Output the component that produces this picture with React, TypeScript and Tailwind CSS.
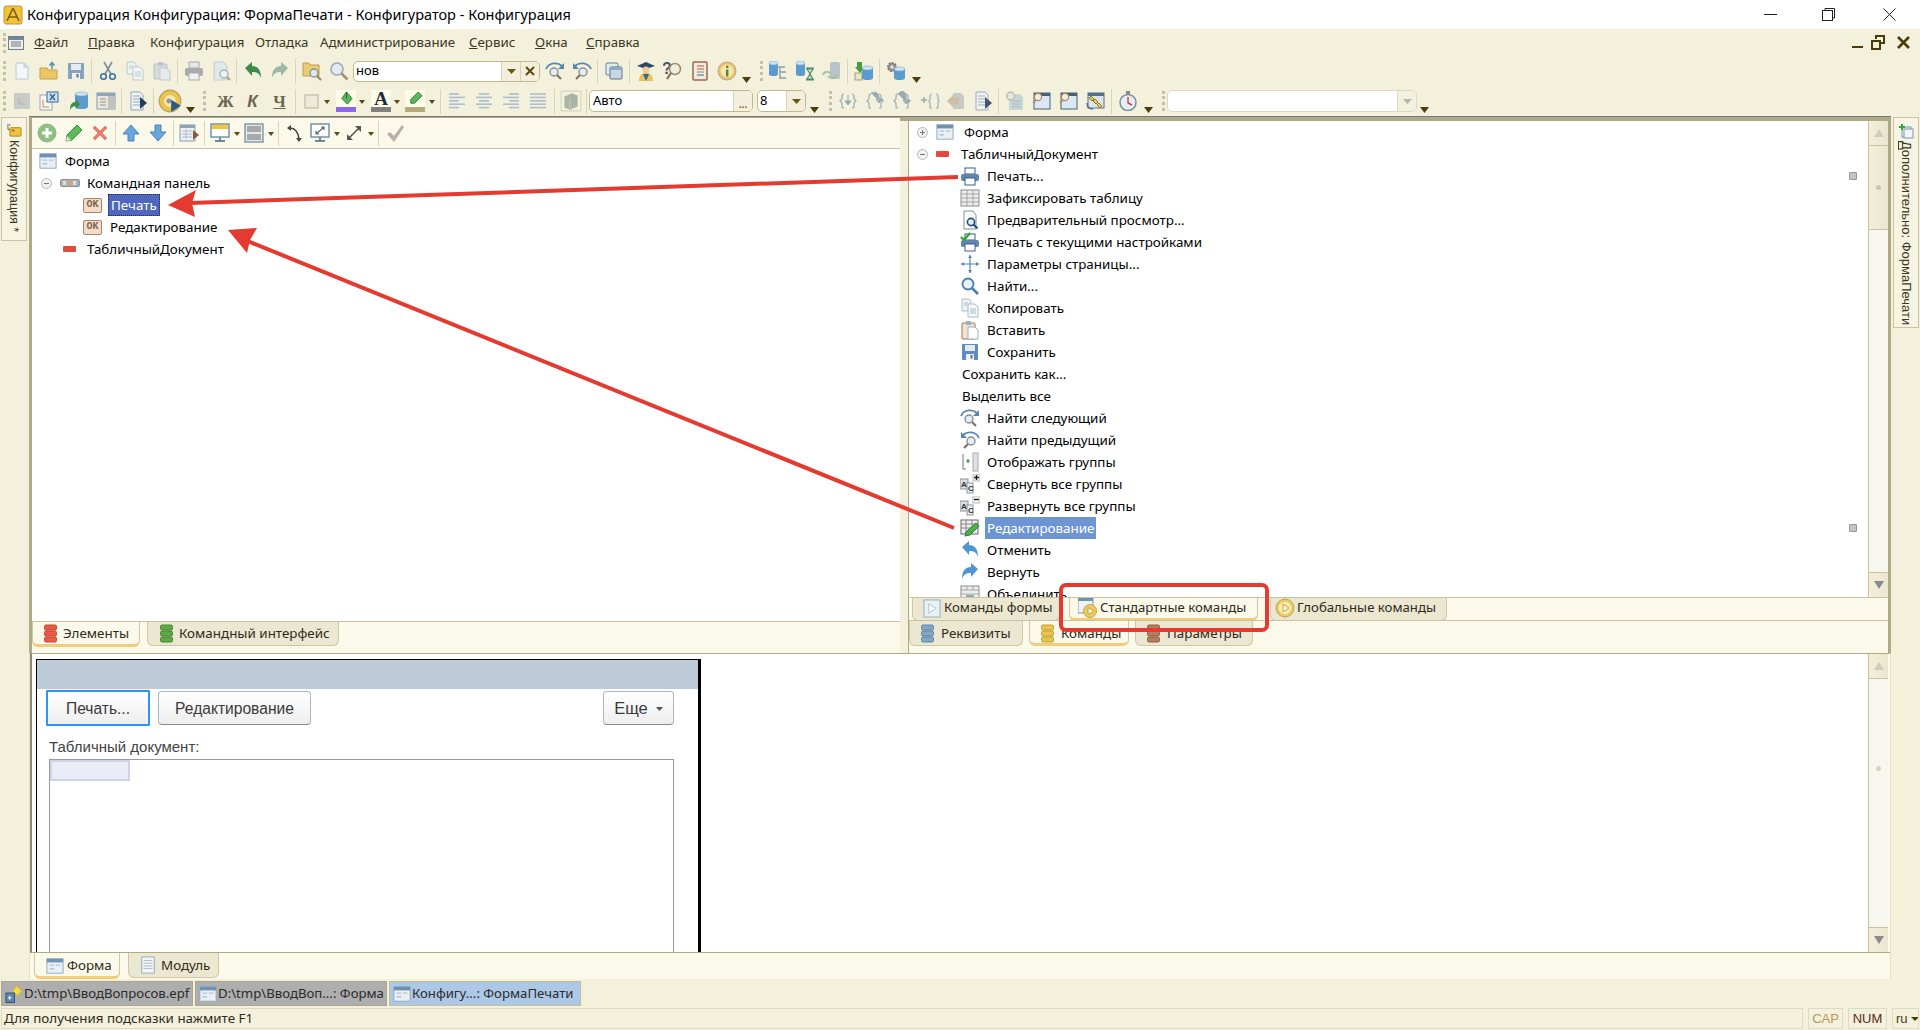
import React from "react";

type P = { children?: React.ReactNode; s?: number; o?: number };
const S = ({ children, s = 20, o = 1 }: P) => (
  <svg viewBox="0 0 20 20" width={s} height={s} opacity={o} className="shrink-0">{children}</svg>
);

const Btn = ({ children, cls = "w-[27px]" }: { children?: React.ReactNode; cls?: string }) => (
  <span className={`flex h-[26px] items-center justify-center shrink-0 ${cls}`}>{children}</span>
);
const Sep = () => <span className="mx-[2px] h-[25px] w-[1px] shrink-0 bg-[#d9d5bd]" />;
const Grip = ({ cls = "" }: { cls?: string }) => (
  <span className={`h-[20px] w-[3px] shrink-0 border-l-[3px] border-dotted border-[#c4c0a4] ${cls}`} />
);
const Dd = ({ cls = "w-[14px]", big = true }: { cls?: string; big?: boolean }) => (
  <span className={`flex shrink-0 justify-center ${cls} ${big ? "mt-[17px]" : "mt-[2px]"}`}>
    {big ? (
      <svg width="9" height="6"><path d="M0 0h9L4.5 6z" fill="#4d3c0c" /></svg>
    ) : (
      <svg width="6" height="4"><path d="M0 0h6L3 4z" fill="#5a4a18" /></svg>
    )}
  </span>
);

/* toolbar drawings */
const Doc = ({ o = 1 }) => <S o={o}><path d="M4 2h8l4 4v12H4z" fill="#f2f7fb" stroke="#b4cada" /><path d="M12 2v4h4z" fill="#d5e3ee" stroke="#b4cada" /></S>;
const Open = () => <S><path d="M1 7h7l1 2h9v9H1z" fill="#ecc766" stroke="#c3a050" /><path d="M13 8V2M10.5 4.5L13 1.5l2.5 3" fill="none" stroke="#5f8fb5" strokeWidth="1.6" /></S>;
const Save = ({ c = "#8aa3ba" }) => <S><rect x="2" y="2" width="16" height="16" rx="1" fill={c} /><rect x="5" y="3" width="10" height="6" fill="#e3ecf3" /><rect x="6" y="12" width="8" height="6" fill="#eef2f5" /><rect x="10.5" y="13" width="2" height="3.5" fill="#5d6d7c" /></S>;
const Cut = () => <S><path d="M7 13L14 1M13 13L6 1" stroke="#7c8d9c" strokeWidth="1.6" /><circle cx="5.5" cy="15.5" r="2.8" fill="none" stroke="#3c73ad" strokeWidth="1.6" /><circle cx="14.5" cy="15.5" r="2.8" fill="none" stroke="#3c73ad" strokeWidth="1.6" /></S>;
const Copy = ({ o = 0.75 }) => <S o={o}><path d="M2 1h7l2 2v10H2z" fill="#edf3f7" stroke="#a9bccb" /><path d="M8 6h7l3 3v10H8z" fill="#f6f9fb" stroke="#a9bccb" /><path d="M10 11h6M10 13h6M10 15h6M4 5h4M4 7h3" stroke="#a9bccb" /></S>;
const Paste = ({ o = 0.7 }) => <S o={o}><rect x="2" y="3" width="13" height="15" rx="1" fill="#c8d4dd" stroke="#9fb0be" /><rect x="6" y="1" width="5" height="4" fill="#a9b8c4" /><path d="M8 7h6l4 3v9H8z" fill="#e3eaef" stroke="#a9b8c4" /></S>;
const Print = ({ c = "#aaa", o = 1 }: { c?: string; o?: number }) => <S o={o}><rect x="5" y="1" width="10" height="6" fill="#e6e6e6" stroke={c} /><rect x="1" y="7" width="18" height="8" rx="2" fill={c} /><rect x="5" y="12" width="10" height="7" fill="#f2f2f2" stroke={c} /></S>;
const Prev = ({ o = 1, c = "#b5c4d0" }) => <S o={o}><path d="M3 1h9l4 4v14H3z" fill="#dfe7ee" stroke={c} /><circle cx="13" cy="13" r="4" fill="#eef3f6" stroke="#8aa" strokeWidth="1.4" /><path d="M16 16l3 3" stroke="#a58a68" strokeWidth="2" /></S>;
const Undo = ({ c = "#3c8c48", o = 1 }) => <S o={o}><path d="M2 7l7-6v4c5 0 9 3 9 12-2-5-4-6-9-6v4z" fill={c} /></S>;
const Redo = ({ c = "#9db8a4" }) => <S><path d="M18 7l-7-6v4c-5 0-9 3-9 12 2-5 4-6 9-6v4z" fill={c} /></S>;
const FolderFind = () => <S><path d="M1 2h6l1 2h9v11H1z" fill="#eccb76" stroke="#bb9d55" /><circle cx="12" cy="12" r="4" fill="#dfe8ee" stroke="#84909a" strokeWidth="1.3" /><path d="M15 15l4 4" stroke="#a07f5c" strokeWidth="2" /></S>;
const Mag = ({ s = 20 }) => <S s={s}><circle cx="8" cy="8" r="6" fill="#e0ebf4" stroke="#9aa8b2" strokeWidth="1.5" /><path d="M12.5 12.5l6 6" stroke="#b08c66" strokeWidth="2.6" /></S>;
const Arc = ({ flip = false, s = 20 }) => <svg viewBox="0 0 20 20" width={s} height={s} className={`shrink-0 ${flip ? "-scale-x-100" : ""}`}><path d="M1 8C4 1 13 1 17 5" fill="none" stroke="#5586b0" strokeWidth="1.8" /><path d="M19 2v6h-6z" fill="#5586b0" /><circle cx="9" cy="11" r="4" fill="#e3edf3" stroke="#8a8f98" strokeWidth="1.4" /><path d="M12 14l4 4" stroke="#8a6e5c" strokeWidth="2.2" /></svg>;
const Wins = () => <S><rect x="2" y="2" width="12" height="12" rx="1" fill="#dfe9f0" stroke="#6f8596" /><rect x="6" y="6" width="12" height="12" rx="1" fill="#c7d8e4" stroke="#5a7286" /><rect x="6" y="6" width="12" height="3" fill="#8ba9c0" /></S>;
const Hat = () => <S><path d="M1 5l9-4 9 4-9 3z" fill="#2c4a68" /><circle cx="10" cy="9" r="3.6" fill="#f0caa0" /><path d="M3 20c0-6 3-8 7-8s7 2 7 8z" fill="#e9c25a" /><path d="M7 13l3 7 3-7z" fill="#37658c" /></S>;
const QMag = () => <S><text x="-1" y="13" fontSize="16" fontWeight="700" fontFamily="Liberation Sans" fill="#45596d">?</text><circle cx="12" cy="8" r="5.5" fill="#f0f0dc" stroke="#9c8c68" strokeWidth="1.5" /><path d="M8 12l-4 6" stroke="#8c6c50" strokeWidth="2.2" /></S>;
const Book = () => <S><rect x="3" y="1" width="14" height="18" rx="1" fill="#f3e9df" stroke="#9c6a4e" strokeWidth="1.5" /><path d="M7 5h7M7 8h7" stroke="#c05a48" /><path d="M7 11h7" stroke="#5ba060" /><path d="M7 14h7" stroke="#3f6c96" /></S>;
const Info = () => <S><circle cx="10" cy="10" r="9" fill="#efc05e" stroke="#a9a9a0" /><circle cx="10" cy="10" r="6.5" fill="#f8e6ae" /><rect x="9" y="8.5" width="2.4" height="7" fill="#4c8c3e" /><circle cx="10.2" cy="5.8" r="1.4" fill="#4c8c3e" /></S>;
const Db = ({ x = 7, y = 4, w = 11, h = 14, o = 1 }) => <g opacity={o}><rect x={x} y={y} width={w} height={h} fill="#5b9bd0" /><ellipse cx={x + w / 2} cy={y + h} rx={w / 2} ry="2" fill="#5b9bd0" /><ellipse cx={x + w / 2} cy={y} rx={w / 2} ry="2" fill="#cfe2f0" stroke="#80a8c8" strokeWidth=".6" /></g>;
const DbTree = () => <S><Db x={1} y={2} w={9} h={11} /><path d="M9 6h8M12 6v12M12 11h6M12 17h6" stroke="#90a0a8" strokeWidth="1.4" fill="none" /></S>;
const DbHour = () => <S><Db x={1} y={2} w={9} h={11} /><path d="M11 7h8M11 19h8M12 8l3 5-3 5h6l-3-5 3-5z" fill="#cfe0cc" stroke="#4c8c6a" strokeWidth="1.1" /></S>;
const DbRec = () => <S><rect x="8" y="1" width="10" height="17" rx="2" fill="#b9c2c8" /><path d="M1 14c1-4 6-4 8-1M15 14c-1 4-7 4-9 1" fill="none" stroke="#a6c3a6" strokeWidth="2" /></S>;
const DbDown = () => <S><path d="M3 1h5v5h3l-5 6-5-6h2z" fill="#4b9a3c" /><rect x="1" y="12" width="7" height="7" fill="#ece6c8" stroke="#a99d78" /><Db x={8} y={7} w={11} h={10} /></S>;
const DbGear = () => <S><circle cx="6" cy="6" r="4" fill="#989898" stroke="#777" strokeWidth="2" strokeDasharray="2 1" /><circle cx="6" cy="6" r="1.5" fill="#eee" /><Db x={8} y={8} w={11} h={9} /></S>;
const Gray = () => <S><rect x="2" y="2" width="16" height="16" rx="1" fill="#c9cbc6" /><path d="M7 7v6h6" stroke="#adb0ab" fill="none" /></S>;
const XDoc = () => <S><rect x="1" y="4" width="12" height="15" fill="#f8f6ea" stroke="#97a8b6" /><rect x="8" y="1" width="11" height="10" fill="#cfe0ee" stroke="#34699a" /><path d="M11 3l5 6M16 3l-5 6" stroke="#34699a" strokeWidth="1.5" /><path d="M4 9v7h6" stroke="#c08a6a" fill="none" /></S>;
const DbArrow = () => <S><Db x={6} y={3} w={13} h={13} /><path d="M1 19c0-6 2-8 6-8V8l4 5-4 5v-3c-3 0-4 1-6 4z" fill="#3d8f4c" /></S>;
const Panel = () => <S><rect x="1" y="2" width="18" height="16" fill="#e5e7e2" stroke="#8a9aa6" /><rect x="1" y="2" width="18" height="3" fill="#8ea6b8" /><rect x="12" y="5" width="7" height="13" fill="#bfc3bc" /><path d="M4 8h6M4 11h6M4 14h6" stroke="#a98f76" /></S>;
const DocArr = ({ o = 1 }) => <S o={o}><path d="M3 1h9l3 3v15H3z" fill="#eef3f7" stroke="#8fa4b6" /><path d="M5 5h7M5 8h7M5 11h7M5 14h7" stroke="#94a9ba" /><path d="M12 6l7 6-7 6z" fill="#243d58" /></S>;
const Disc = () => <S s={24}><circle cx="10" cy="10" r="9" fill="#eec24e" stroke="#b5a45c" /><circle cx="10" cy="10" r="5" fill="#f8e7a8" /><circle cx="9" cy="10" r="2" fill="#7d98ae" /><path d="M11 9l8 5-8 5z" fill="#2a5a86" /></S>;
const Box = () => <S><rect x="4" y="4" width="13" height="13" fill="#ecebd9" stroke="#c6c4aa" strokeWidth="1.4" /></S>;
const Fill = () => <span className="flex w-[20px] flex-col items-center shrink-0"><span className="flex h-[17px] w-[20px] items-center justify-center bg-[#fdfce9]"><svg viewBox="0 0 16 16" width="15" height="15"><path d="M8 1l6 7-5 6-6-6z" fill="#5cb85c" stroke="#3a7a3e" /><path d="M8 1v7" stroke="#2b5a2e" /></svg></span><span className="h-[5px] w-[20px] bg-[#8a68f0]" /></span>;
const AIcon = () => <span className="flex w-[20px] flex-col items-center shrink-0"><span className="flex h-[17px] w-[20px] items-center justify-center bg-[#fdfce9] font-['Liberation_Serif'] text-[19px] font-bold leading-none text-[#1d2a3a]">A</span><span className="h-[5px] w-[20px] bg-[#808080]" /></span>;
const Marker = () => <span className="flex w-[20px] flex-col items-center shrink-0"><span className="flex h-[17px] w-[20px] items-center justify-center bg-[#fdfce9]"><svg viewBox="0 0 16 16" width="15" height="15"><path d="M11 1l4 4-8 8H3v-4z" fill="#58b85a" stroke="#3a7a3e" /></svg></span><span className="h-[5px] w-[20px] bg-[#b4ab7a]" /></span>;
const Align = ({ k }: { k: number }) => {
  const l = k === 0 ? [2, 2, 2, 2, 2] : k === 1 ? [5, 2, 5, 2, 5] : k === 2 ? [8, 2, 8, 2, 8] : [2, 2, 2, 2, 2];
  const r = k === 0 ? [12, 18, 12, 18, 12] : k === 1 ? [15, 18, 15, 18, 15] : k === 2 ? [18, 18, 18, 18, 18] : [18, 18, 18, 18, 18];
  return <S>{l.map((a, i) => <path key={i} d={`M${a} ${3 + i * 3.4}H${r[i]}`} stroke="#a9bccb" strokeWidth="1.5" />)}</S>;
};
const Cube = () => <S s={22}><rect x="1" y="1" width="18" height="18" fill="none" stroke="#bdbca6" strokeDasharray="1 1" /><path d="M4 6l7-3 5 2v10l-7 3-5-2z" fill="#a9b5a2" /><path d="M9 7v11" stroke="#c5ccbf" /></S>;
const Brace = ({ k }: { k: number }) => (
  <S o={0.75}>
    <path d={k === 3 ? "M12 3c-2 0-2 1-2 3v2l-1 2 1 2v3c0 2 0 2 2 2M16 3c2 0 2 1 2 3v2l1 2-1 2v3c0 2 0 2-2 2" : "M5 3c-2 0-2 1-2 3v2l-2 2 2 2v3c0 2 0 2 2 2M13 3c2 0 2 1 2 3v2l2 2-2 2v3c0 2 0 2-2 2"} fill="none" stroke="#8198a8" strokeWidth="1.2" />
    {k === 0 && <path d="M9 4v9M6 10l3 4 3-4z" fill="#7a94a6" stroke="#7a94a6" />}
    {k === 1 && <path d="M5 2c5-2 8 0 8 5v3M10 8l3 4 4-4z" fill="#7a94a6" stroke="#7a94a6" />}
    {k === 2 && <path d="M5 3c3-4 8-3 8 2v6M10 9l3 4 4-4z" fill="#7a94a6" stroke="#7a94a6" />}
    {k === 3 && <path d="M1 9h6M4 6v6" stroke="#7a94a6" strokeWidth="1.4" />}
  </S>
);
const DiamondDoc = () => <S o={0.7}><path d="M7 2h8l3 3v13H7z" fill="#b5bcc0" /><path d="M1 10l6-6v3h6v6H7v3z" fill="#c2a88e" /></S>;
const DocMag = () => <S o={0.7}><path d="M4 3h11l3 3v13H4z" fill="#b9cad6" /><path d="M7 10h9M7 13h9M7 16h9" stroke="#8ea6b8" /><circle cx="5.5" cy="5" r="3.8" fill="#dfe6ea" stroke="#a89a88" strokeWidth="1.2" /></S>;
const WinMag = () => <S><rect x="2" y="2" width="16" height="16" fill="#dbe8f3" stroke="#46607a" /><rect x="2" y="2" width="16" height="3" fill="#46607a" /><circle cx="6" cy="6" r="3.6" fill="#f2eedc" stroke="#a8896a" strokeWidth="1.2" /><path d="M4 9l-3 3" stroke="#a8896a" strokeWidth="1.6" /></S>;
const WinChain = () => <S><rect x="2" y="2" width="16" height="15" fill="#dbe5ee" stroke="#54708a" /><rect x="2" y="2" width="16" height="3" fill="#54708a" /><path d="M5 5l3 3-2 2-3-3zM9 8l3 3-2 2-3-3zM13 12l3 3-2 2-3-3z" fill="#ecc54f" stroke="#967a2a" /><path d="M1 12c0 4 2 6 6 6" fill="none" stroke="#54708a" strokeWidth="1.4" /></S>;
const Clock = () => <S><rect x="8" y="0" width="4" height="3" fill="#8a8a82" /><circle cx="10" cy="11.5" r="8" fill="#e3eef6" stroke="#7d8c98" strokeWidth="1.5" /><path d="M10 6v6l4 2" stroke="#d0402e" strokeWidth="1.4" fill="none" /></S>;

const PlusC = () => <S><circle cx="10" cy="10" r="9" fill="#8fc07e" stroke="#9aa89a" /><path d="M10 5v10M5 10h10" stroke="#fff" strokeWidth="3" /></S>;
const Pencil = () => <S><path d="M13 2l5 5-10 10-6 1 1-6z" fill="#5bbb58" stroke="#3b8b40" /><path d="M3 13l4 4-5 1z" fill="#e3e7d0" /></S>;
const RedX = () => <S><path d="M3 5l2-2 5 5 5-5 2 2-5 5 5 5-2 2-5-5-5 5-2-2 5-5z" fill="#ea7b70" stroke="#d66459" strokeWidth=".5" /></S>;
const UpA = ({ down = false }) => <S><path d={down ? "M7 2h6v7h5l-8 9-8-9h5z" : "M7 18h6v-7h5l-8-9-8 9h5z"} fill="#66a8dc" stroke="#4c84b4" /></S>;
const TblArr = () => <S><rect x="1" y="2" width="15" height="16" fill="#eef1f4" stroke="#8a9cac" /><rect x="1" y="2" width="15" height="3" fill="#8ea6b8" /><path d="M3 8h10M3 11h10M3 14h10M7 6v10" stroke="#b1bcc6" /><path d="M14 7l6 5-6 5z" fill="#8c5a3a" /></S>;
const Mon = ({ kind }: { kind: number }) => <S><rect x="1" y="1" width="18" height="13" fill="#fff" stroke="#6d8a9e" strokeWidth="1.4" />{kind === 0 ? <rect x="2" y="2" width="16" height="4" fill="#f2c72c" /> : <path d="M6 11l8-7M11 4h3v3M6 8v3h3" stroke="#5a6c78" strokeWidth="1.2" fill="none" />}<path d="M10 14v3M5 18h10" stroke="#6d8a9e" strokeWidth="2" /></S>;
const Split = () => <S><rect x="1" y="1" width="18" height="18" fill="#e2e8ec" stroke="#7b97ab" strokeWidth="1.4" /><rect x="3" y="3" width="14" height="6" fill="#a9a9a9" /><rect x="3" y="11" width="14" height="6" fill="#a9a9a9" /></S>;
const PathI = () => <S><path d="M5 5c5 0 8 4 9 11" fill="none" stroke="#444" strokeWidth="1.6" /><path d="M6 2l-4 3 4 3zM11 15l3 4 3-4z" fill="#444" /></S>;
const Expand = () => <S><path d="M4 16L16 4" stroke="#555" strokeWidth="1.6" /><path d="M11 3h6v6zM3 11v6h6z" fill="#555" /></S>;
const Check = () => <S><path d="M2 11l3-2 4 4 8-11 2 2-10 15z" fill="#bcaeac" /></S>;

const FormI = ({ s = 18 }) => <S s={s}><rect x="1" y="2" width="18" height="16" fill="#e9eff4" stroke="#8fa7ba" /><rect x="1" y="2" width="18" height="4" fill="#6e93b2" /><path d="M4 9h5M11 9h5M4 13h5" stroke="#b0c3d2" strokeWidth="1.5" /></S>;
const Cmd = () => <svg width="20" height="8" className="shrink-0"><rect x=".5" y=".5" width="19" height="7" rx="1" fill="#aab0b6" stroke="#8a9096" /><rect x="3" y="2" width="3" height="4" fill="#e6e0c0" /><rect x="8" y="2" width="3" height="4" fill="#e09a70" /><rect x="13" y="2" width="3" height="4" fill="#e6e0c0" /></svg>;
const Ok = () => <span className="flex h-[15px] w-[19px] shrink-0 items-center justify-center rounded-[2px] border border-[#a5856c] bg-[#f6dcc6] font-['Liberation_Mono'] text-[10px] font-bold leading-none text-[#7c6552]">OK</span>;
const Dash = () => <span className="block h-[6px] w-[13px] shrink-0 rounded-[1px] bg-[#e04b3c]" />;
const Tree = ({ minus }: { minus?: boolean }) => <span className="flex h-[11px] w-[11px] shrink-0 items-center justify-center rounded-full border border-[#b5b9bb] bg-[#f2f2f2]"><svg width="7" height="7"><path d={minus ? "M1 3.5h5" : "M1 3.5h5M3.5 1v5"} stroke="#777" /></svg></span>;

const PrintB = ({ check = false }) => <S><rect x="5" y="2" width="10" height="6" fill="#fff" stroke="#395f86" /><rect x="1" y="8" width="18" height="7" rx="2" fill="#5f86ae" /><rect x="5" y="12" width="10" height="7" fill="#fff" stroke="#395f86" />{check && <path d="M1 5l3 3 6-7" stroke="#2fa838" strokeWidth="2.4" fill="none" />}</S>;
const Grid = () => <S><rect x="1" y="2" width="18" height="16" fill="#ededed" stroke="#8c8c8c" /><path d="M1 6h18M1 10h18M1 14h18M7 2v16M13 2v16" stroke="#a4a4a4" /></S>;
const PrevB = () => <S><path d="M4 1h9l3 4v14H4z" fill="#fff" stroke="#7f8d98" /><circle cx="11" cy="12" r="3.6" fill="#e4eff6" stroke="#1e4e80" strokeWidth="1.6" /><path d="M13.5 14.5l4 4" stroke="#1e4e80" strokeWidth="2.2" /></S>;
const Cross = () => <S><path d="M10 1v18M1 10h18" stroke="#5f86ae" strokeWidth="1.2" /><path d="M10 1l-2 3h4zM10 19l-2-3h4zM1 10l3-2v4zM19 10l-3-2v4z" fill="#5f86ae" /></S>;
const FindB = () => <S><circle cx="8" cy="8" r="5.5" fill="#e7f1f9" stroke="#4d7da9" strokeWidth="1.8" /><path d="M12 12l6 6" stroke="#4d7da9" strokeWidth="2.6" /></S>;
const Group = () => <S><path d="M3 2v15h3" fill="none" stroke="#777" /><rect x="13" y="1" width="5" height="18" fill="#e0e0e0" stroke="#aaa" /><path d="M6 9h4M8 7v4" stroke="#2e8a3c" strokeWidth="1.2" /></S>;
const Abc = ({ plus }: { plus?: boolean }) => <S><rect x="0" y="5" width="8" height="10" fill="#d9dfe4" stroke="#8a96a0" /><rect x="7" y="9" width="6" height="10" fill="#eceff1" stroke="#8a96a0" /><text x="1" y="13" fontSize="8" fontWeight="700" fontFamily="Liberation Sans" fill="#333">A</text><text x="8" y="17" fontSize="8" fontWeight="700" fontFamily="Liberation Sans" fill="#333">C</text><rect x="13" y="0" width="7" height="7" fill="#f2f2f2" stroke="#bbb" /><path d={plus ? "M14 3.5h5M16.5 1v5" : "M14 3.5h5"} stroke="#222" strokeWidth="1.4" /></S>;
const EditT = () => <S><rect x="1" y="2" width="17" height="14" fill="#eee" stroke="#666" /><path d="M1 6h17M1 10h17M6 2v14M12 2v14" stroke="#888" /><path d="M16 5l3 3-9 9-5 1 1-4z" fill="#4db04a" stroke="#2d7f34" /></S>;
const MergeT = () => <S><rect x="1" y="2" width="18" height="17" fill="#eee" stroke="#8c8c8c" /><path d="M1 6h18M1 10h18M7 2v4M13 2v4" stroke="#a4a4a4" /><rect x="6" y="11" width="8" height="7" fill="#90a7ba" /></S>;

const Stack = ({ c, d }: { c: string; d: string }) => (
  <svg width="13" height="19" className="shrink-0"><rect x=".5" y="1" width="12" height="5" rx="1.5" fill={c} stroke={d} /><rect x=".5" y="7" width="12" height="5" rx="1.5" fill={c} stroke={d} /><rect x=".5" y="13" width="12" height="5" rx="1.5" fill={c} stroke={d} /></svg>
);
const PlayDoc = () => <S s={19}><rect x="1" y="1" width="17" height="18" fill="#e9f1f7" stroke="#93aabb" /><path d="M6 5l8 5-8 5z" fill="#fff" stroke="#adc0cf" /></S>;
const PlayCoin = ({ win }: { win?: boolean }) => win ? (
  <S><rect x="0" y="0" width="15" height="15" fill="#eef3f6" stroke="#7d99ae" /><rect x="0" y="0" width="15" height="3" fill="#6e93b2" /><circle cx="12" cy="13" r="6.5" fill="#eec95c" stroke="#c4a64e" /><path d="M10 9.5l6 3.5-6 3.5z" fill="#fdf6d0" stroke="#c4a64e" /></S>
) : (
  <S><circle cx="10" cy="10" r="9" fill="#eec95c" stroke="#b5a56a" /><circle cx="10" cy="10" r="6.3" fill="#f8ecb0" /><path d="M8 6l6 4-6 4z" fill="#fdf6d0" stroke="#c4a64e" /></S>
);

const Scroll = ({ children }: { children?: React.ReactNode }) => (
  <div className="flex h-full w-[20px] shrink-0 flex-col border-l border-[#c8c2a2] bg-[#f8f7ef]">
    {children}
  </div>
);
const ArrowBtn = ({ down, cls = "h-[25px]" }: { down?: boolean; cls?: string }) => (
  <div className={`flex w-full shrink-0 items-center justify-center border-[#c8c2a2] bg-gradient-to-r from-[#f3efdc] to-[#ebe6cd] ${cls} ${down ? "border-t" : "border-b"}`}>
    <svg width="10" height="10"><path d={down ? "M0 1h10L5 9z" : "M0 9h10L5 1z"} fill={down ? "#8a8a8a" : "#cfcdbb"} /></svg>
  </div>
);

const Tab = ({ active, cls, children }: { active?: boolean; cls: string; children: React.ReactNode }) => (
  <div className={`flex shrink-0 items-center rounded-b-[6px] border border-t-0 border-[#cdc7a6] text-[#2e2b1a] ${active ? "bg-[#fbf9ea] border-b-[3px] border-b-[#f0cd7c]" : "bg-[#ece7d0]"} ${cls}`}>
    {children}
  </div>
);

const Row = ({ pl, label, icon, mark, sel, dark, box }: { pl: string; label: string; icon?: React.ReactNode; mark?: boolean; sel?: boolean; dark?: boolean; box?: React.ReactNode }) => (
  <div className={`relative flex h-[22px] shrink-0 items-center text-black ${pl}`}>
    {box}
    {icon}
    {label && (
      <span className={`flex h-[22px] items-center whitespace-nowrap px-[2px] ${sel ? "bg-[#6e95d3] text-white" : ""} ${dark ? "border border-dotted border-[#1c2a66] bg-[#4f68bd] text-white" : ""}`}>{label}</span>
    )}
    {mark && <span className="absolute right-[11px] top-[7px] h-[8px] w-[8px] rounded-[1px] border border-[#999] bg-[#c4c4c4]" />}
  </div>
);

const M = ({ w, u, t }: { w: string; u?: string; t: string }) => (
  <span className={`shrink-0 whitespace-nowrap ${w}`}>{u && <u>{u}</u>}{t}</span>
);

export default function App() {
  return (
    <div className="relative flex h-[1030px] w-[1920px] flex-col overflow-hidden bg-[#f3f0dc] font-['Noto_Sans','Liberation_Sans',sans-serif] text-[13.4px] text-[#2e2b1a]">
      {/* title bar */}
      <div className="flex h-[29px] shrink-0 items-center bg-white pl-[3px] text-[14.5px] text-black">
        <svg width="20" height="20" viewBox="0 0 20 20" className="shrink-0"><rect x="1" y="1" width="18" height="18" rx="2" fill="#f2c430" stroke="#b89a3a" /><path d="M10 3L4 16M10 3l6 13M6 12h8" stroke="#7a5a1e" strokeWidth="1.6" fill="none" /></svg>
        <span className="ml-[4px] whitespace-nowrap">Конфигурация Конфигурация: ФормаПечати - Конфигуратор - Конфигурация</span>
        <div className="ml-auto flex items-center">
          <Btn cls="w-[57px]"><svg width="14" height="2"><rect width="13" height="1" fill="#222" /></svg></Btn>
          <Btn cls="w-[59px]"><svg width="13" height="13" fill="none" stroke="#222"><path d="M3 2.5V.5h9.5V10H10.5" /><rect x=".5" y="2.5" width="10" height="10" /></svg></Btn>
          <Btn cls="w-[62px]"><svg width="13" height="13" stroke="#222"><path d="M.5.5l12 12M12.5.5l-12 12" /></svg></Btn>
        </div>
      </div>

      {/* menu */}
      <div className="flex h-[27px] shrink-0 items-center pl-[3px] text-[13.3px] text-[#3a361f]">
        <Grip cls="h-[14px] mr-[2px]" />
        <svg width="16" height="14" viewBox="0 0 16 14" className="mr-[10px] shrink-0"><rect x=".5" y=".5" width="15" height="13" fill="#eee" stroke="#6c7d8c" /><rect x="1" y="1" width="14" height="3" fill="#6c8aa4" /><path d="M3 6h10M3 8h10M3 10h10" stroke="#777" /></svg>
        <M w="w-[54px]" u="Ф" t="айл" />
        <M w="w-[62px]" u="П" t="равка" />
        <M w="w-[105px]" t="Конфигурация" />
        <M w="w-[65px]" t="Отладка" />
        <M w="w-[149px]" t="Администрирование" />
        <M w="w-[66px]" u="С" t="ервис" />
        <M w="w-[51px]" u="О" t="кна" />
        <M w="w-[60px]" u="С" t="правка" />
        <div className="ml-auto mr-[10px] flex items-center gap-[8px]">
          <svg width="11" height="4" className="mt-[9px]"><rect width="11" height="2" y="1" fill="#4a3a0c" /></svg>
          <svg width="14" height="15" fill="none" stroke="#4a3a0c" strokeWidth="2"><path d="M5 4V1h8v7h-3" /><rect x="1" y="6" width="8" height="8" /></svg>
          <svg width="13" height="13" stroke="#4a3a0c" strokeWidth="2.6" className="ml-[4px]"><path d="M1 1l11 11M12 1L1 12" /></svg>
        </div>
      </div>

      {/* toolbar 1 */}
      <div className="flex h-[30px] shrink-0 items-center pl-[3px]">
        <Grip cls="mr-[2px]" />
        <Btn><Doc /></Btn><Btn><Open /></Btn><Btn><Save /></Btn><Sep />
        <Btn><Cut /></Btn><Btn><Copy /></Btn><Btn><Paste /></Btn><Sep />
        <Btn><Print /></Btn><Btn><Prev o={0.8} /></Btn><Sep />
        <Btn><Undo /></Btn><Btn><Redo /></Btn><Sep />
        <Btn><FolderFind /></Btn><Btn cls="w-[28px]"><Mag /></Btn>
        <div className="flex h-[21px] w-[187px] shrink-0 items-center overflow-hidden rounded-[5px] border border-[#c0b88e] bg-white text-[13px] text-black">
          <span className="flex-1 pl-[2px]">нов</span>
          <span className="flex h-full w-[19px] items-center justify-center border-l border-[#d8d3b4] bg-[#f3efdc]"><svg width="9" height="5"><path d="M0 0h9L4.5 5z" fill="#6c5614" /></svg></span>
          <span className="flex h-full w-[19px] items-center justify-center border-l border-[#d8d3b4] bg-[#f3efdc]"><svg width="10" height="10" stroke="#5c4a10" strokeWidth="2"><path d="M1 1l8 8M9 1L1 9" /></svg></span>
        </div>
        <Btn cls="ml-[1px] w-[27px]"><Arc /></Btn><Btn><Arc flip /></Btn><Sep />
        <Btn><Wins /></Btn><Sep />
        <Btn><Hat /></Btn><Btn><QMag /></Btn><Btn><Book /></Btn><Btn cls="w-[27px]"><Info /></Btn>
        <Dd cls="w-[12px]" /><Grip cls="ml-[8px] mr-[1px]" />
        <Btn><DbTree /></Btn><Btn><DbHour /></Btn><Btn><DbRec /></Btn><Sep />
        <Btn><DbDown /></Btn><Sep />
        <Btn><DbGear /></Btn><Dd />
      </div>

      {/* toolbar 2 */}
      <div className="flex h-[30px] shrink-0 items-center pl-[3px]">
        <Grip cls="mr-[2px]" />
        <Btn><Gray /></Btn><Btn><XDoc /></Btn><Btn cls="ml-[3px] w-[27px]"><DbArrow /></Btn><Btn><Panel /></Btn><Sep />
        <Btn><DocArr /></Btn><Sep />
        <Btn cls="w-[27px]"><Disc /></Btn><Dd /><Grip cls="ml-[6px] mr-[6px]" />
        <Btn><span className="font-['Liberation_Serif'] text-[17px] font-bold leading-none text-[#6c6450]">Ж</span></Btn>
        <Btn><span className="font-['Liberation_Sans'] text-[17px] font-bold italic leading-none text-[#6c6450]">К</span></Btn>
        <Btn><span className="font-['Liberation_Serif'] text-[17px] font-bold leading-none text-[#6c6450] underline">Ч</span></Btn>
        <Sep />
        <Btn cls="ml-[3px] w-[20px]"><Box /></Btn><Dd big={false} cls="w-[12px]" />
        <Btn cls="ml-[3px] w-[20px]"><Fill /></Btn><Dd big={false} cls="w-[12px]" />
        <Btn cls="ml-[3px] w-[20px]"><AIcon /></Btn><Dd big={false} cls="w-[12px]" />
        <Btn cls="ml-[2px] w-[20px]"><Marker /></Btn><Dd big={false} cls="w-[13px]" />
        <Sep />
        <Btn><Align k={0} /></Btn><Btn><Align k={1} /></Btn><Btn><Align k={2} /></Btn><Btn cls="w-[28px]"><Align k={3} /></Btn>
        <Sep />
        <Btn><Cube /></Btn><Sep />
        <div className="flex h-[22px] w-[164px] shrink-0 items-center overflow-hidden rounded-[5px] border border-[#c0b88e] bg-white text-[13px] text-black">
          <span className="flex-1 pl-[3px]">Авто</span>
          <span className="flex h-full w-[19px] items-end justify-center border-l border-[#d8d3b4] bg-[#f3efdc] pb-[4px] text-[10px] font-bold leading-[6px] text-[#7a6a30]">...</span>
        </div>
        <div className="ml-[4px] flex h-[22px] w-[49px] shrink-0 items-center overflow-hidden rounded-[5px] border border-[#c0b88e] bg-white text-[13px] text-black">
          <span className="flex-1 pl-[2px]">8</span>
          <span className="flex h-full w-[19px] items-center justify-center border-l border-[#d8d3b4] bg-[#f3efdc]"><svg width="9" height="5"><path d="M0 0h9L4.5 5z" fill="#6c5614" /></svg></span>
        </div>
        <Dd cls="w-[16px]" /><Grip cls="ml-[7px] mr-[3px]" />
        <Btn><Brace k={0} /></Btn><Btn><Brace k={1} /></Btn><Btn><Brace k={2} /></Btn><Btn><Brace k={3} /></Btn>
        <Btn cls="w-[26px]"><DiamondDoc /></Btn><Btn cls="w-[27px]"><DocArr o={0.85} /></Btn><Sep />
        <Btn><DocMag /></Btn><Btn><WinMag /></Btn><Btn><WinMag /></Btn><Btn><WinChain /></Btn><Sep />
        <Btn><Clock /></Btn><Dd /><Grip cls="ml-[7px] mr-[2px]" />
        <div className="flex h-[22px] w-[250px] shrink-0 items-center overflow-hidden rounded-[5px] border border-[#dcd8c2] bg-white">
          <span className="ml-auto flex h-full w-[19px] items-center justify-center border-l border-[#e0dcc8] bg-[#f3f0e0]"><svg width="9" height="5"><path d="M0 0h9L4.5 5z" fill="#b5b5a8" /></svg></span>
        </div>
        <Dd />
      </div>

      {/* main work area */}
      <div className="flex h-[865px] shrink-0">
        {/* left side tab */}
        <div className="w-[29px] shrink-0 pl-[1px] pt-[1px]">
          <div className="flex h-[124px] w-[26px] flex-col items-center border border-[#c9c4a5] bg-[#f7f4e2] pt-[5px]">
            <svg width="15" height="15" viewBox="0 0 16 16" className="shrink-0"><path d="M1 1v6h5M3 1v2" stroke="#666" fill="none" /><rect x="3" y="5" width="12" height="9" rx="1" fill="#eec63e" stroke="#a58a24" /><rect x="5" y="7" width="3" height="2" fill="#d0542e" /></svg>
            <span className="mt-[2px] whitespace-nowrap font-['Liberation_Sans'] text-[12.5px] leading-[22px] text-[#3a361f] [writing-mode:vertical-rl]">Конфигурация *</span>
          </div>
        </div>

        {/* centre */}
        <div className="flex h-[863px] w-[1862px] shrink-0 flex-col">
          <div className="flex h-[537px] shrink-0 flex-col">
            <div className="h-[1px] shrink-0 bg-[#75797a]" />
            <div className="flex min-h-0 flex-1">
              {/* left pane */}
              <div className="flex w-[871px] shrink-0 flex-col border-l-[3px] border-[#b0a986] bg-[#fbf9ea]">
                <div className="h-[1px] shrink-0 bg-[#b0a986]" />
                <div className="flex h-[31px] shrink-0 items-center border-b border-[#c9c3a2] pl-[1px]">
                  <Btn><PlusC /></Btn><Btn><Pencil /></Btn><Btn cls="w-[26px]"><RedX /></Btn><Sep />
                  <Btn cls="w-[26px]"><UpA /></Btn><Btn><UpA down /></Btn><Sep />
                  <Btn cls="w-[26px]"><TblArr /></Btn><Sep />
                  <Btn cls="w-[24px] ml-[1px]"><Mon kind={0} /></Btn><Dd big={false} cls="w-[10px]" />
                  <Btn cls="w-[24px]"><Split /></Btn><Dd big={false} cls="w-[10px]" /><Sep />
                  <Btn><PathI /></Btn>
                  <Btn cls="w-[24px]"><Mon kind={1} /></Btn><Dd big={false} cls="w-[10px]" />
                  <Btn cls="w-[24px]"><Expand /></Btn><Dd big={false} cls="w-[10px]" /><Sep />
                  <Btn cls="w-[27px]"><Check /></Btn>
                </div>
                <div className="flex h-[472px] shrink-0 flex-col bg-white pt-[1px]">
                  <Row pl="pl-[7px]" icon={<span className="mr-[6px] flex"><FormI /></span>} label="Форма" />
                  <Row pl="pl-[9px]" box={<span className="mr-[8px]"><Tree minus /></span>} icon={<span className="mr-[5px]"><Cmd /></span>} label="Командная панель" />
                  <Row pl="pl-[51px]" icon={<span className="mr-[6px]"><Ok /></span>} label="Печать" dark />
                  <Row pl="pl-[51px]" icon={<span className="mr-[6px]"><Ok /></span>} label="Редактирование" />
                  <Row pl="pl-[31px]" icon={<span className="mr-[9px] flex"><Dash /></span>} label="ТабличныйДокумент" />
                </div>
                <div className="flex h-[31px] shrink-0 items-start gap-[7px] border-t border-[#c9c3a2]">
                  <Tab active cls="h-[25px] w-[108px] gap-[6px] pl-[11px]"><Stack c="#ea5a48" d="#c84434" />Элементы</Tab>
                  <Tab cls="h-[24px] w-[192px] gap-[6px] pl-[12px]"><Stack c="#62a84a" d="#46862f" />Командный интерфейс</Tab>
                </div>
              </div>
              {/* splitter */}
              <div className="w-[8px] shrink-0 bg-[#f3f0dc]">
                <div className="h-[4px] w-full bg-[#b0a986]" />
              </div>
              {/* right pane */}
              <div className="flex min-w-0 flex-1 flex-col border-l border-r-[3px] border-[#b0a986] bg-[#fbf9ea]">
                <div className="h-[4px] shrink-0 bg-[#b0a986]" />
                <div className="flex h-[476px] shrink-0 overflow-hidden bg-white">
                  <div className="flex min-w-0 flex-1 flex-col -ml-[1px]">
                    <Row pl="pl-[9px]" box={<span className="mr-[8px]"><Tree /></span>} icon={<span className="mr-[8px] flex"><FormI /></span>} label="Форма" />
                    <Row pl="pl-[9px]" box={<span className="mr-[8px]"><Tree minus /></span>} icon={<span className="mr-[10px] flex"><Dash /></span>} label="ТабличныйДокумент" />
                    <Row pl="pl-[52px]" icon={<span className="mr-[5px] flex"><PrintB /></span>} label="Печать..." mark />
                    <Row pl="pl-[52px]" icon={<span className="mr-[5px] flex"><Grid /></span>} label="Зафиксировать таблицу" />
                    <Row pl="pl-[52px]" icon={<span className="mr-[5px] flex"><PrevB /></span>} label="Предварительный просмотр..." />
                    <Row pl="pl-[52px]" icon={<span className="mr-[5px] flex"><PrintB check /></span>} label="Печать с текущими настройками" />
                    <Row pl="pl-[52px]" icon={<span className="mr-[5px] flex"><Cross /></span>} label="Параметры страницы..." />
                    <Row pl="pl-[52px]" icon={<span className="mr-[5px] flex"><FindB /></span>} label="Найти..." />
                    <Row pl="pl-[52px]" icon={<span className="mr-[5px] flex"><Copy o={1} /></span>} label="Копировать" />
                    <Row pl="pl-[52px]" icon={<span className="mr-[5px] flex"><S><rect x="2" y="3" width="13" height="16" rx="1" fill="#efe3d4" stroke="#a4744e" /><rect x="6" y="1" width="5" height="4" fill="#9ab0c2" /><path d="M8 7h7l3 3v9H8z" fill="#fff" stroke="#9ab0c2" /></S></span>} label="Вставить" />
                    <Row pl="pl-[52px]" icon={<span className="mr-[5px] flex"><Save c="#5e8cc0" /></span>} label="Сохранить" />
                    <Row pl="pl-[52px]" label="Сохранить как..." />
                    <Row pl="pl-[52px]" label="Выделить все" />
                    <Row pl="pl-[52px]" icon={<span className="mr-[5px] flex"><Arc /></span>} label="Найти следующий" />
                    <Row pl="pl-[52px]" icon={<span className="mr-[5px] flex"><Arc flip /></span>} label="Найти предыдущий" />
                    <Row pl="pl-[52px]" icon={<span className="mr-[5px] flex"><Group /></span>} label="Отображать группы" />
                    <Row pl="pl-[52px]" icon={<span className="mr-[5px] flex"><Abc plus /></span>} label="Свернуть все группы" />
                    <Row pl="pl-[52px]" icon={<span className="mr-[5px] flex"><Abc /></span>} label="Развернуть все группы" />
                    <Row pl="pl-[52px]" icon={<span className="mr-[5px] flex"><EditT /></span>} label="Редактирование" mark sel />
                    <Row pl="pl-[52px]" icon={<span className="mr-[5px] flex"><Undo c="#4f95d4" /></span>} label="Отменить" />
                    <Row pl="pl-[52px]" icon={<span className="mr-[5px] flex"><Redo c="#4f95d4" /></span>} label="Вернуть" />
                    <Row pl="pl-[52px]" icon={<span className="mr-[5px] flex"><MergeT /></span>} label="Объединить" />
                  </div>
                  <Scroll>
                    <ArrowBtn />
                    <div className="flex h-[84px] shrink-0 items-center justify-center border-b border-[#c8c2a2] bg-gradient-to-r from-[#f3efdc] to-[#ebe6cd]"><span className="h-[5px] w-[5px] rounded-full bg-[#c9c6b0]" /></div>
                    <div className="flex-1" />
                    <ArrowBtn down />
                  </Scroll>
                </div>
                <div className="flex h-[23px] shrink-0 items-start gap-[9px] border-t border-[#c9c3a2] pl-[3px] text-[13.2px]">
                  <Tab cls="h-[23px] w-[148px] gap-[2px] pb-[2px] pl-[10px]"><PlayDoc />Команды формы</Tab>
                  <Tab active cls="h-[23px] w-[189px] gap-[2px] pl-[8px] pb-[1px]"><PlayCoin win />Стандартные команды</Tab>
                  <Tab cls="ml-[3px] h-[23px] w-[177px] gap-[2px] pb-[2px] pl-[4px]"><PlayCoin />Глобальные команды</Tab>
                </div>
                <div className="flex h-[33px] shrink-0 items-start gap-[6px] border-t border-[#c9c3a2]">
                  <Tab cls="h-[25px] w-[114px] gap-[7px] pl-[11px] pt-[1px]"><Stack c="#82a6c6" d="#5e83a3" />Реквизиты</Tab>
                  <Tab active cls="h-[25px] w-[100px] gap-[7px] pl-[11px] pt-[3px]"><Stack c="#e8c452" d="#c29e2e" />Команды</Tab>
                  <Tab cls="h-[25px] w-[118px] gap-[7px] pl-[11px] pt-[1px]"><Stack c="#b27e5c" d="#8e5e42" />Параметры</Tab>
                </div>
              </div>
            </div>
          </div>

          {/* lower editor */}
          <div className="flex h-[326px] shrink-0 flex-col border-l border-r border-[#e2dfca] bg-[#fbf9ea]">
            <div className="flex h-[300px] shrink-0 border-y border-[#b0a986] border-l-[2px] border-l-[#8a8878] bg-white">
              <div className="flex min-w-0 flex-1 items-start overflow-hidden pl-[4px] pt-[5px]">
                <div className="flex h-[320px] w-[665px] shrink-0 flex-col border border-r-[3px] border-black bg-white">
                  <div className="h-[29px] shrink-0 bg-[#bdcbd9]" />
                  <div className="flex h-[38px] shrink-0 items-center pl-[9px] pr-[24px] font-['Liberation_Sans'] text-[15.6px] text-[#3a3a3a]">
                    <div className="flex h-[36px] w-[104px] items-center justify-center rounded-[1px] border-[2px] border-[#2d96f0] bg-gradient-to-b from-white to-[#eeeeee] pt-[1px]">Печать...</div>
                    <div className="ml-[8px] flex h-[34px] w-[153px] items-center justify-center rounded-[4px] border border-[#b4b4b4] border-b-[#8a8a8a] bg-gradient-to-b from-white to-[#eeeeee] pt-[1px]">Редактирование</div>
                    <div className="ml-auto flex h-[34px] w-[71px] items-center justify-center gap-[8px] rounded-[4px] border border-[#b4b4b4] border-b-[#8a8a8a] bg-gradient-to-b from-white to-[#eeeeee] pt-[1px]"><span className="text-[16.5px]">Еще</span><svg width="7" height="4"><path d="M0 0h7L3.5 4z" fill="#555" /></svg></div>
                  </div>
                  <div className="ml-[12px] mt-[10px] h-[20px] font-['Liberation_Sans'] text-[15px] leading-[20px] text-[#444]">Табличный документ:</div>
                  <div className="ml-[12px] mt-[2px] h-[250px] w-[625px] border border-[#9a9a9a] bg-white">
                    <div className="h-[21px] w-[80px] border-[2px] border-[#ccd4ea] bg-[#eaedf6]" />
                  </div>
                </div>
              </div>
              <Scroll>
                <ArrowBtn />
                <div className="flex h-[85px] flex-1 items-start justify-center pt-[87px]"><span className="h-[5px] w-[5px] rounded-full bg-[#d6d3bd]" /></div>
                <ArrowBtn down />
              </Scroll>
              <div className="w-[2px] shrink-0 bg-[#fbf9ea]" />
            </div>
            <div className="flex flex-1 items-start gap-[8px] pl-[4px]">
              <Tab active cls="h-[26px] w-[86px] gap-[3px] pl-[11px] pt-[2px]"><FormI s={18} />Форма</Tab>
              <Tab cls="h-[25px] w-[91px] gap-[4px] pl-[10px]"><S s={18}><rect x="3" y="1" width="14" height="18" fill="#f2f4f6" stroke="#8fa7ba" /><path d="M5 5h10M5 8h10M5 11h10M5 14h10" stroke="#aab8c4" /></S>Модуль</Tab>
            </div>
          </div>
        </div>

        {/* right side tab */}
        <div className="ml-[2px] w-[26px] shrink-0 pt-[1px]">
          <div className="flex h-[211px] w-[26px] flex-col items-center border border-[#c9c4a5] bg-[#f7f4e2] pt-[5px]">
            <svg width="16" height="16" viewBox="0 0 16 16" className="shrink-0"><rect x="4" y="4" width="9" height="10" fill="#e6eef3" stroke="#7d99ae" /><rect x="6" y="6" width="9" height="9" fill="#f3f6f8" stroke="#7d99ae" /><path d="M1 4h6M4 1v6" stroke="#2fa838" strokeWidth="2" /></svg>
            <span className="mt-[2px] whitespace-nowrap font-['Liberation_Sans'] text-[13px] leading-[20px] text-[#3a361f] [writing-mode:vertical-rl]"><u>Д</u>ополнительно: ФормаПечати</span>
          </div>
        </div>
      </div>

      {/* window bar */}
      <div className="flex h-[25px] shrink-0 items-stretch gap-[2px] pl-[1px] text-[13.2px] text-[#2b2b2b]">
        <div className="flex w-[192px] items-center gap-[1px] border border-[#a9a58f] bg-[#aeaeae] pl-[2px]">
          <svg width="19" height="20" viewBox="0 0 20 20" className="shrink-0"><path d="M13 1l6 6-5 5-5-5z" fill="#f5d84a" stroke="#c8a82a" /><rect x="2" y="9" width="9" height="10" fill="#5f86ae" stroke="#2f4f70" /><path d="M6 12v4M4 14h4" stroke="#fff" /></svg>
          <span className="whitespace-nowrap">D:\tmp\ВводВопросов.epf</span>
        </div>
        <div className="flex w-[192px] items-center gap-[1px] border border-[#a9a58f] bg-[#aeaeae] pl-[3px]">
          <FormI />
          <span className="whitespace-nowrap">D:\tmp\ВводВоп...: Форма</span>
        </div>
        <div className="flex w-[192px] items-center gap-[1px] border border-[#c6bf96] bg-[#adc8e6] pl-[3px]">
          <FormI />
          <span className="whitespace-nowrap">Конфигу...: ФормаПечати</span>
        </div>
      </div>

      {/* status bar */}
      <div className="mt-[2px] flex h-[21px] shrink-0 items-stretch pl-[1px] text-[#2e2b1a]">
        <div className="flex w-[1802px] shrink-0 items-center border border-[#dedbc4] pl-[2px]">Для получения подсказки нажмите F1</div>
        <div className="ml-[5px] flex w-[35px] shrink-0 items-center justify-center border border-[#dedbc4] font-['Liberation_Sans'] text-[13px] text-[#b39a62]">CAP</div>
        <div className="ml-[5px] flex w-[39px] shrink-0 items-center justify-center border border-[#dedbc4] font-['Liberation_Sans'] text-[13px] text-[#5a2b1a]">NUM</div>
        <div className="ml-[5px] flex w-[27px] shrink-0 items-center gap-[3px] border border-[#dedbc4] pl-[3px] font-['Liberation_Sans'] text-[13px] text-[#4a3a1a]">ru<svg width="8" height="4"><path d="M0 0h8L4 4z" fill="#4a3a0c" /></svg></div>
      </div>

      {/* callouts drawn on top of the picture */}
      <svg width="1920" height="1030" className="pointer-events-none absolute left-0 top-0">
        <path d="M958 177L190 203" stroke="#e53a30" strokeWidth="4" />
        <path d="M168 205L196 190L192 203L195 217Z" fill="#e53a30" />
        <path d="M954 528L245 240" stroke="#e53a30" strokeWidth="4" />
        <path d="M228 230L257 228L250 240L247 253Z" fill="#e53a30" />
        <rect x="1061" y="585" width="206" height="45" rx="5" fill="none" stroke="#e53a30" strokeWidth="4" />
      </svg>
    </div>
  );
}
